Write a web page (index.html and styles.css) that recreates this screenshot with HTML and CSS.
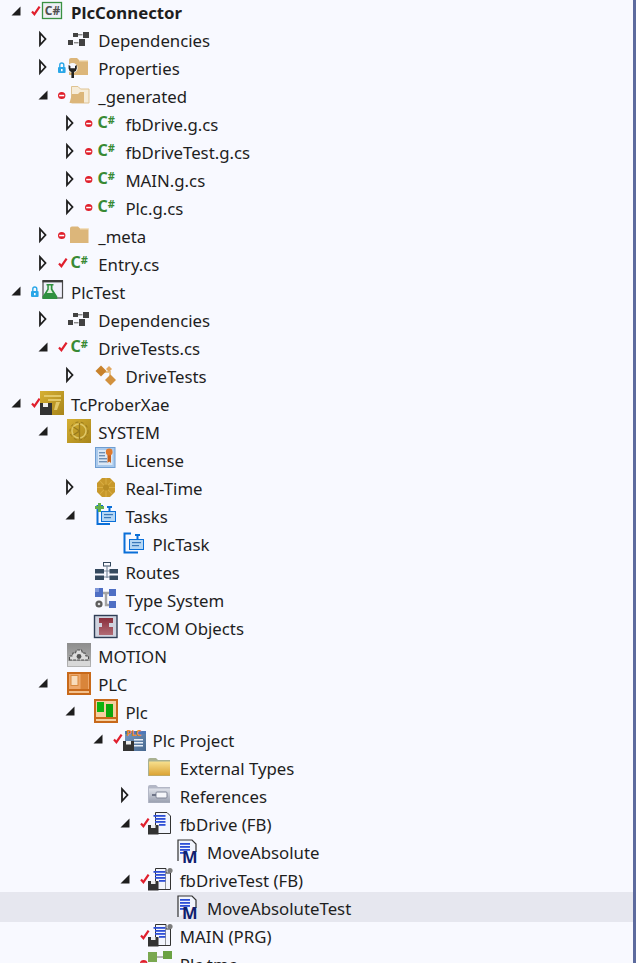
FILE: index.html
```html
<!DOCTYPE html>
<html lang="en">
<head>
<meta charset="utf-8">
<title>Solution Explorer</title>
<link rel="stylesheet" href="styles.css">
</head>
<body>
<svg class="defs" aria-hidden="true">
  <defs>
    <linearGradient id="gold" x1="0" y1="0" x2="1" y2="1"><stop offset="0" stop-color="#d6b034"/><stop offset="1" stop-color="#a8851a"/></linearGradient>
    <linearGradient id="grey" x1="0" y1="0" x2="0" y2="1"><stop offset="0" stop-color="#8d8d8d"/><stop offset="1" stop-color="#b4b4b4"/></linearGradient>
    <linearGradient id="yel" x1="0" y1="0" x2="0" y2="1"><stop offset="0" stop-color="#f7e08e"/><stop offset="1" stop-color="#dba233"/></linearGradient>
    <linearGradient id="gfold" x1="0" y1="0" x2="0" y2="1"><stop offset="0" stop-color="#dfe2ea"/><stop offset="1" stop-color="#9aa0b0"/></linearGradient>
    <linearGradient id="docb" x1="0" y1="0" x2="1" y2="1"><stop offset="0" stop-color="#7a9cc6"/><stop offset="1" stop-color="#47688f"/></linearGradient>
    <linearGradient id="maroon" x1="0" y1="0" x2="0" y2="1"><stop offset="0" stop-color="#8a2f3c"/><stop offset="1" stop-color="#b06a74"/></linearGradient>
  </defs>
  <symbol id="t-open" viewBox="0 0 23 28"><polygon points="12.5,7.5 12.5,16.5 3.5,16.5" fill="#1e1e1e"/></symbol>
  <symbol id="t-closed" viewBox="0 0 23 28"><polygon points="5,6 5,18 10.5,12" fill="#f8f9ff" stroke="#1e1e1e" stroke-width="1.8"/></symbol>
  <symbol id="s-check" viewBox="0 0 10 28"><path d="M1 12.5 L3.4 15.2 L8.6 7.6" fill="none" stroke="#e01f2d" stroke-width="2.2"/></symbol>
  <symbol id="s-minus" viewBox="0 0 10 28"><ellipse cx="3.7" cy="12.5" rx="3.7" ry="3.5" fill="#e0202c"/><rect x="1.2" y="11.8" width="5" height="1.5" fill="#fff"/></symbol>
  <symbol id="s-lock" viewBox="0 0 10 28"><path d="M1.8 12 V10 a2 2 0 0 1 4 0 V12" fill="none" stroke="#2aa7e8" stroke-width="1.4"/><rect x="0" y="12" width="7.6" height="6" rx="1" fill="#2aa7e8"/><rect x="3" y="14" width="1.6" height="2.2" fill="#fff"/></symbol>

  <symbol id="i-csproj" viewBox="0 0 24 28"><rect x="1.5" y="3.5" width="19" height="16" fill="#eef0f6" stroke="#3a9142" stroke-width="1.3"/></symbol>
  <symbol id="i-deps" viewBox="0 0 24 28"><g fill="#424242"><rect x="0" y="13" width="5" height="5"/><rect x="5" y="6" width="5" height="4"/><rect x="11" y="12" width="6" height="7"/><rect x="15" y="5" width="6" height="6"/></g><g fill="#8a8a8a"><rect x="10" y="7" width="4.5" height="1.4"/><rect x="6" y="15" width="4.5" height="1.4"/></g></symbol>
  <symbol id="i-props" viewBox="0 0 24 28"><path d="M1 5 q0-2 2-2 h6 l2 2 h9 v15 H1z" fill="#dcb67a"/><rect x="11" y="5" width="9" height="1.4" fill="#f2e0c0"/><circle cx="4.6" cy="13" r="5" fill="#f8f9ff"/><path d="M.6 10 v3.500 a4 4 0 0 0 2.800 3.400 V23 h2.600 v-6.100 a4 4 0 0 0 2.800-3.400 v-3.500 l-1.800 1 v2.200 h-4.600 v-2.200z" fill="#222"/></symbol>
  <symbol id="i-fopen" viewBox="0 0 24 28"><path d="M3.5 3.5 h6.5 l2.500 2.500 h8.500 v14 H3.500z" fill="#f6ecd9" stroke="#dfc392"/><polygon points="1.500,20 4,11 10,11 12,9 16,9 16,20" fill="#dcb67a"/></symbol>
  <symbol id="i-folder" viewBox="0 0 24 28"><path d="M2 5.500 q0-2 2-2 h6 l2 2 h8.500 V20 H2z" fill="#dcb67a"/><rect x="12" y="5" width="8.500" height="1.400" fill="#f2e0c0"/></symbol>
  <symbol id="i-flask" viewBox="0 0 24 28"><rect x="2" y="2" width="19.500" height="17" fill="#f0f0fb" stroke="#4a4a4a" stroke-width="1.200"/><rect x="1.500" y="1" width="20.500" height="2.400" fill="#3c3c3c"/><path d="M5.500 5 h7 v1.500 h-1 v3.500 l4.800 7.500 v2.500 H1.500 V17.500 L6.300 10 V6.500 h-.8z" fill="#2f9040"/><path d="M7.800 6.500 h2 v4 l2 3.500 h-6 l2-3.500z" fill="#dff0dc"/></symbol>
  <symbol id="i-class" viewBox="0 0 24 28"><path d="M7 9 L15 9 L15 17" fill="none" stroke="#e8c590" stroke-width="2"/><polygon points="6,2.500 11.500,8 6,13.500 .5,8" fill="#c8822c"/><polygon points="15.500,11.500 21,17 15.500,22.500 10,17" fill="#d2913e"/><polygon points="14,3 17,6 14,9 11,6" fill="#e2a860"/></symbol>
  <symbol id="i-tcproj" viewBox="0 0 24 28"><rect x="-1" y="0" width="24" height="24" fill="url(#gold)"/><path d="M3 4 h17 v2 h-17z M7 8 h13 v2 h-13z M15 11 h4 l-3 8 h-3z" fill="#e2c868"/><rect x="-1" y="12" width="12" height="12" fill="#333"/><rect x="2" y="12" width="5" height="4" fill="#eee"/></symbol>
  <symbol id="i-system" viewBox="0 0 24 28"><rect x="-1" y="0" width="24" height="24" fill="url(#gold)"/><circle cx="11" cy="12" r="7" fill="none" stroke="#e0c868" stroke-width="1.500"/><circle cx="11" cy="12" r="9" fill="none" stroke="#97791c" stroke-width="1" stroke-dasharray="3 2.500"/><path d="M11.500 4 V20 M11.500 12 L5.500 8 M11.500 12 L5.500 16" stroke="#97791c" stroke-width="1.300" fill="none"/></symbol>
  <symbol id="i-license" viewBox="0 0 24 28"><rect x=".5" y=".5" width="19.500" height="20" fill="#a9c9ec" stroke="#6e9dd2"/><rect x="3" y="3" width="14.500" height="15" fill="#dbe8f6"/><g fill="#6e8fb5"><rect x="4" y="5" width="6" height="1.400"/><rect x="4" y="8" width="6" height="1.400"/><rect x="4" y="11" width="8" height="1.400"/><rect x="4" y="14" width="8" height="1.400"/></g><path d="M12.500 8 h3.500 v8 l-1.800-1.500 L12.500 16z" fill="#c8601c"/><circle cx="14.200" cy="5" r="3.400" fill="#e07a2c"/></symbol>
  <symbol id="i-rt" viewBox="0 0 24 28"><polygon points="7,3 15,3 20,8 20,17 15,22 7,22 2,17 2,8" fill="#c8992c"/><path d="M11 3 V22 M2 12.500 H20 M5 6 L17 19 M17 6 L5 19" stroke="#d9ae44" stroke-width="1.100"/><circle cx="11" cy="12.500" r="3" fill="#b88c24"/></symbol>
  <symbol id="i-tasks" viewBox="0 0 24 28"><path d="M8 3 H2.500 V21 H15" fill="none" stroke="#0a6fd8" stroke-width="2"/><path d="M12 4 h5 M14.500 4 v4" stroke="#0a6fd8" stroke-width="2" fill="none"/><rect x="6.500" y="8.500" width="14" height="10" fill="#b4d6f4" stroke="#0a6fd8"/><g fill="#3b78b8"><rect x="9" y="11" width="9" height="1.200"/><rect x="9" y="14" width="7" height="1.200"/></g><path d="M3 0 h3 v3 h3 v3 h-3 v3 h-3 v-3 h-3 v-3 h3z" fill="#62ae4c"/></symbol>
  <symbol id="i-task" viewBox="0 0 24 28"><path d="M8 2.500 H1.500 V21.500 H15" fill="none" stroke="#0a6fd8" stroke-width="2"/><path d="M12 4 h5 M14.500 4 v4" stroke="#0a6fd8" stroke-width="2" fill="none"/><rect x="6.500" y="8.500" width="14" height="10" fill="#b4d6f4" stroke="#0a6fd8"/><g fill="#3b78b8"><rect x="9" y="11" width="9" height="1.200"/><rect x="9" y="14" width="7" height="1.200"/></g></symbol>
  <symbol id="i-routes" viewBox="0 0 24 28"><rect x="8.500" y="3.500" width="7" height="3.500" fill="#f8f9ff" stroke="#34495e"/><path d="M12 7 V19 M8 12 H15 M8 18 H15" stroke="#7f8ea0" stroke-width="1.200"/><g fill="#34495e"><rect x="0" y="10" width="9" height="4.500"/><rect x="0" y="16.500" width="9" height="4.500"/><rect x="14.500" y="10" width="8.500" height="4.500"/><rect x="14.500" y="16.500" width="8.500" height="4.500"/></g></symbol>
  <symbol id="i-types" viewBox="0 0 24 28"><path d="M8 6 H11 V18 H14 M11 6 H14" fill="none" stroke="#a4a4a4" stroke-width="2.400"/><rect x="0" y="1" width="8" height="9" fill="#4f6fc4"/><rect x="0" y="1" width="4" height="4" fill="#7f97d8"/><rect x="14" y="2" width="7" height="7" fill="#4f6fc4"/><rect x="14" y="14" width="7" height="7" fill="#4f6fc4"/><circle cx="4" cy="17" r="3.600" fill="#5c5c5c"/><circle cx="4" cy="17" r="1.300" fill="#ddd"/></symbol>
  <symbol id="i-tccom" viewBox="0 0 24 28"><rect x="-.5" y=".5" width="22.500" height="22" fill="#cfd2de" stroke="#2f3e56" stroke-width="1.400"/><path d="M4 3 h14 v5 h-4 v4 h4 v8 H4 v-8 h3 V8 H4z" fill="url(#maroon)"/></symbol>
  <symbol id="i-motion" viewBox="0 0 24 28"><rect x="-1" y="0" width="24" height="24" fill="url(#grey)"/><rect x="0" y="18" width="22" height="5" fill="#d8d8d8"/><path d="M1.500 17 v-4 h2.500 l1-3 h2.500 l1-3 h5 l1 3 h2.500 l1 3 h2.500 v4z" fill="#dcdcdc" stroke="#4e4e4e" stroke-width="1.100" stroke-dasharray="3 1"/><circle cx="11" cy="13.500" r="2.400" fill="#555"/></symbol>
  <symbol id="i-plc" viewBox="0 0 24 28"><rect x="-1" y="1" width="24" height="23" fill="#c8691a"/><rect x="1" y="3" width="20" height="15" fill="#eda86c"/><rect x="3" y="4.500" width="7" height="10" fill="#f8dcbc" stroke="#d88a40"/><rect x="12.500" y="3" width="7.500" height="15" fill="#d9853a"/><rect x="1" y="20" width="20" height="2" fill="#f3c08c"/></symbol>
  <symbol id="i-plcg" viewBox="0 0 24 28"><rect x="-1" y="0" width="24" height="24" fill="#c8691a"/><rect x="1" y="2" width="20" height="16" fill="#f5cfa0"/><rect x="2" y="3" width="7" height="10" fill="#0fb30f"/><rect x="11" y="5" width="7" height="13" fill="#0ca60c"/><rect x="1" y="20" width="20" height="2" fill="#f5cfa0"/></symbol>
  <symbol id="i-plcproj" viewBox="0 0 24 28"><rect x="2" y="4" width="21" height="20" fill="url(#docb)"/><rect x="2" y="4" width="21" height="3" fill="#4e78ba"/><g fill="#e8eef6"><rect x="11" y="12" width="9" height="1.500"/><rect x="11" y="15" width="9" height="1.500"/><rect x="11" y="18" width="9" height="1.500"/></g><rect x="0" y="14" width="11" height="10" fill="#333"/><rect x="3" y="14" width="5" height="3.500" fill="#eee"/></symbol>
  <symbol id="i-ext" viewBox="0 0 24 28"><path d="M-2 5 q0-2 2-2 h6 l2 2 h12 V21 H-2z" fill="#a9b192"/><rect x="-1" y="6.500" width="21" height="14" fill="url(#yel)"/></symbol>
  <symbol id="i-refs" viewBox="0 0 24 28"><path d="M-2 4 q0-2 2-2 h6 l2 2 h12 V20 H-2z" fill="#b3b7c6"/><rect x="-1" y="5.500" width="21" height="14" fill="url(#gfold)"/><rect x="6" y="9" width="11" height="6" rx="1" fill="#f5f6fa" stroke="#7e8496"/><rect x="2" y="11" width="4" height="2" fill="#6f7588"/></symbol>
  <symbol id="i-pou" viewBox="0 0 24 28"><path d="M5.500 1.500 H17 l3.500 3.500 V22.500 H5.500z" fill="#f2f5fd" stroke="#333"/><g fill="#2d4fd6"><rect x="3.500" y="4" width="12" height="1.800"/><rect x="5" y="7" width="10.500" height="1.800"/><rect x="5" y="10" width="10.500" height="1.800"/><rect x="9" y="13" width="6.500" height="1.800"/></g><rect x="-2" y="14" width="10.500" height="9.500" fill="#333"/><rect x="1" y="14" width="4.500" height="3" fill="#eee"/></symbol>
  <symbol id="i-pout" viewBox="0 0 24 28"><path d="M5.500 1.500 H16 V22.500 H5.500z" fill="#f2f5fd" stroke="#333"/><path d="M16 6 h4.500 V22.500 h-4.500" fill="#f2f5fd" stroke="#333"/><circle cx="20" cy="3.500" r="2.600" fill="#7d7d7d"/><g fill="#2d4fd6"><rect x="3.500" y="4" width="12" height="1.800"/><rect x="5" y="7" width="10.500" height="1.800"/><rect x="5" y="10" width="10.500" height="1.800"/><rect x="9" y="13" width="6.500" height="1.800"/></g><rect x="-2" y="14" width="10.500" height="9.500" fill="#333"/><rect x="1" y="14" width="4.500" height="3" fill="#eee"/></symbol>
  <symbol id="i-method" viewBox="0 0 24 28"><path d="M1 22 V1 H15 l4 4 V13" fill="#f2f5fd" stroke="#333" stroke-width="1.200"/><g fill="#2d4fd6"><rect x="3" y="4" width="10" height="1.800"/><rect x="3" y="7" width="10" height="1.800"/><rect x="3" y="10" width="10" height="1.800"/><rect x="3" y="13" width="5" height="1.800"/></g></symbol>
  <symbol id="i-tmc" viewBox="0 0 24 28"><path d="M6 6 H15" stroke="#9c9c9c" stroke-width="1.500"/><rect x="-2" y="1" width="9" height="10" fill="#7aa850"/><rect x="13" y="0" width="9" height="8" fill="#6ba244"/></symbol>
</svg>
<div class="pane">
  <main class="tree">
    <div class="row l0"><span class="twisty"><svg><use href="#t-open"/></svg></span><span class="status"><svg><use href="#s-check"/></svg></span><span class="icon"><svg><use href="#i-csproj"/><text class="g-proj" x="3.800" y="16">C#</text></svg></span><span class="label bold">PlcConnector</span></div>
    <div class="row l1"><span class="twisty"><svg><use href="#t-closed"/></svg></span><span class="status"></span><span class="icon"><svg><use href="#i-deps"/></svg></span><span class="label">Dependencies</span></div>
    <div class="row l1"><span class="twisty"><svg><use href="#t-closed"/></svg></span><span class="status"><svg><use href="#s-lock"/></svg></span><span class="icon"><svg><use href="#i-props"/></svg></span><span class="label">Properties</span></div>
    <div class="row l1"><span class="twisty"><svg><use href="#t-open"/></svg></span><span class="status"><svg><use href="#s-minus"/></svg></span><span class="icon"><svg><use href="#i-fopen"/></svg></span><span class="label">_generated</span></div>
    <div class="row l2"><span class="twisty"><svg><use href="#t-closed"/></svg></span><span class="status"><svg><use href="#s-minus"/></svg></span><span class="icon"><svg><text class="g-cs" x="2.500" y="17">C<tspan class="g-hash" dy="-4">#</tspan></text></svg></span><span class="label">fbDrive.g.cs</span></div>
    <div class="row l2"><span class="twisty"><svg><use href="#t-closed"/></svg></span><span class="status"><svg><use href="#s-minus"/></svg></span><span class="icon"><svg><text class="g-cs" x="2.500" y="17">C<tspan class="g-hash" dy="-4">#</tspan></text></svg></span><span class="label">fbDriveTest.g.cs</span></div>
    <div class="row l2"><span class="twisty"><svg><use href="#t-closed"/></svg></span><span class="status"><svg><use href="#s-minus"/></svg></span><span class="icon"><svg><text class="g-cs" x="2.500" y="17">C<tspan class="g-hash" dy="-4">#</tspan></text></svg></span><span class="label">MAIN.g.cs</span></div>
    <div class="row l2"><span class="twisty"><svg><use href="#t-closed"/></svg></span><span class="status"><svg><use href="#s-minus"/></svg></span><span class="icon"><svg><text class="g-cs" x="2.500" y="17">C<tspan class="g-hash" dy="-4">#</tspan></text></svg></span><span class="label">Plc.g.cs</span></div>
    <div class="row l1"><span class="twisty"><svg><use href="#t-closed"/></svg></span><span class="status"><svg><use href="#s-minus"/></svg></span><span class="icon"><svg><use href="#i-folder"/></svg></span><span class="label">_meta</span></div>
    <div class="row l1"><span class="twisty"><svg><use href="#t-closed"/></svg></span><span class="status"><svg><use href="#s-check"/></svg></span><span class="icon"><svg><text class="g-cs" x="2.500" y="17">C<tspan class="g-hash" dy="-4">#</tspan></text></svg></span><span class="label">Entry.cs</span></div>
    <div class="row l0"><span class="twisty"><svg><use href="#t-open"/></svg></span><span class="status"><svg><use href="#s-lock"/></svg></span><span class="icon"><svg><use href="#i-flask"/></svg></span><span class="label">PlcTest</span></div>
    <div class="row l1"><span class="twisty"><svg><use href="#t-closed"/></svg></span><span class="status"></span><span class="icon"><svg><use href="#i-deps"/></svg></span><span class="label">Dependencies</span></div>
    <div class="row l1"><span class="twisty"><svg><use href="#t-open"/></svg></span><span class="status"><svg><use href="#s-check"/></svg></span><span class="icon"><svg><text class="g-cs" x="2.500" y="17">C<tspan class="g-hash" dy="-4">#</tspan></text></svg></span><span class="label">DriveTests.cs</span></div>
    <div class="row l2"><span class="twisty"><svg><use href="#t-closed"/></svg></span><span class="status"></span><span class="icon"><svg><use href="#i-class"/></svg></span><span class="label">DriveTests</span></div>
    <div class="row l0"><span class="twisty"><svg><use href="#t-open"/></svg></span><span class="status"><svg><use href="#s-check"/></svg></span><span class="icon"><svg><use href="#i-tcproj"/></svg></span><span class="label">TcProberXae</span></div>
    <div class="row l1"><span class="twisty"><svg><use href="#t-open"/></svg></span><span class="status"></span><span class="icon"><svg><use href="#i-system"/></svg></span><span class="label">SYSTEM</span></div>
    <div class="row l2"><span class="twisty"></span><span class="status"></span><span class="icon"><svg><use href="#i-license"/></svg></span><span class="label">License</span></div>
    <div class="row l2"><span class="twisty"><svg><use href="#t-closed"/></svg></span><span class="status"></span><span class="icon"><svg><use href="#i-rt"/></svg></span><span class="label">Real-Time</span></div>
    <div class="row l2"><span class="twisty"><svg><use href="#t-open"/></svg></span><span class="status"></span><span class="icon"><svg><use href="#i-tasks"/></svg></span><span class="label">Tasks</span></div>
    <div class="row l3"><span class="twisty"></span><span class="status"></span><span class="icon"><svg><use href="#i-task"/></svg></span><span class="label">PlcTask</span></div>
    <div class="row l2"><span class="twisty"></span><span class="status"></span><span class="icon"><svg><use href="#i-routes"/></svg></span><span class="label">Routes</span></div>
    <div class="row l2"><span class="twisty"></span><span class="status"></span><span class="icon"><svg><use href="#i-types"/></svg></span><span class="label">Type System</span></div>
    <div class="row l2"><span class="twisty"></span><span class="status"></span><span class="icon"><svg><use href="#i-tccom"/></svg></span><span class="label">TcCOM Objects</span></div>
    <div class="row l1"><span class="twisty"></span><span class="status"></span><span class="icon"><svg><use href="#i-motion"/></svg></span><span class="label">MOTION</span></div>
    <div class="row l1"><span class="twisty"><svg><use href="#t-open"/></svg></span><span class="status"></span><span class="icon"><svg><use href="#i-plc"/></svg></span><span class="label">PLC</span></div>
    <div class="row l2"><span class="twisty"><svg><use href="#t-open"/></svg></span><span class="status"></span><span class="icon"><svg><use href="#i-plcg"/></svg></span><span class="label">Plc</span></div>
    <div class="row l3"><span class="twisty"><svg><use href="#t-open"/></svg></span><span class="status"><svg><use href="#s-check"/></svg></span><span class="icon"><svg><use href="#i-plcproj"/><text class="g-plc" x="3.200" y="9">PLC</text></svg></span><span class="label">Plc Project</span></div>
    <div class="row l4"><span class="twisty"></span><span class="status"></span><span class="icon"><svg><use href="#i-ext"/></svg></span><span class="label">External Types</span></div>
    <div class="row l4"><span class="twisty"><svg><use href="#t-closed"/></svg></span><span class="status"></span><span class="icon"><svg><use href="#i-refs"/></svg></span><span class="label">References</span></div>
    <div class="row l4"><span class="twisty"><svg><use href="#t-open"/></svg></span><span class="status"><svg><use href="#s-check"/></svg></span><span class="icon"><svg><use href="#i-pou"/></svg></span><span class="label">fbDrive (FB)</span></div>
    <div class="row l5"><span class="twisty"></span><span class="status"></span><span class="icon"><svg><use href="#i-method"/><text class="g-m" x="5" y="24">M</text></svg></span><span class="label">MoveAbsolute</span></div>
    <div class="row l4"><span class="twisty"><svg><use href="#t-open"/></svg></span><span class="status"><svg><use href="#s-check"/></svg></span><span class="icon"><svg><use href="#i-pout"/></svg></span><span class="label">fbDriveTest (FB)</span></div>
    <div class="row l5 selected"><span class="twisty"></span><span class="status"></span><span class="icon"><svg><use href="#i-method"/><text class="g-m" x="5" y="24">M</text></svg></span><span class="label">MoveAbsoluteTest</span></div>
    <div class="row l4"><span class="twisty"></span><span class="status"><svg><use href="#s-check"/></svg></span><span class="icon"><svg><use href="#i-pout"/></svg></span><span class="label">MAIN (PRG)</span></div>
    <div class="row l4"><span class="twisty"></span><span class="status"><svg><use href="#s-minus"/></svg></span><span class="icon"><svg><use href="#i-tmc"/></svg></span><span class="label">Plc.tmc</span></div>
  </main>
  <div class="edge"></div>
</div>
</body>
</html>
```

FILE: styles.css
```css
* { box-sizing: border-box; }
html, body { margin: 0; height: 100%; }
body {
  background: #f8f9ff;
  color: #1e1e1e;
  font-family: "Noto Sans", "Open Sans", sans-serif;
  font-size: 16.8px;
  overflow: hidden;
}
.defs { position: absolute; width: 0; height: 0; }
symbol { overflow: visible; }
.pane { display: flex; height: 963px; overflow: hidden; }
.tree { flex: 1; min-width: 0; margin-top: -1px; isolation: isolate; }
.edge { flex: none; width: 3px; background: #5d6b9e; }
.row { display: flex; align-items: center; height: 28px; position: relative; white-space: nowrap; }
.l0 { padding-left: 8px; }
.l1 { padding-left: 35.2px; }
.l2 { padding-left: 62.4px; }
.l3 { padding-left: 89.6px; }
.l4 { padding-left: 116.8px; }
.l5 { padding-left: 144px; }
.twisty { flex: none; width: 23px; height: 28px; }
.status { flex: none; width: 10px; height: 28px; }
.icon { flex: none; width: 24px; height: 28px; }
.twisty svg, .status svg, .icon svg { display: block; width: 100%; height: 100%; overflow: visible; }
.label { margin-left: 6px; line-height: 28px; }
.bold { font-weight: 700; }
.selected::before { content: ""; position: absolute; left: 0; right: 0; top: -3px; height: 30px; background: #e6e7ef; z-index: -1; }
.g-proj { font-family: "Noto Sans", sans-serif; font-weight: 700; font-size: 12px; fill: #505050; }
.g-cs { font-family: "Noto Sans", sans-serif; font-weight: 700; font-size: 16px; fill: #388a34; }
.g-hash { font-size: 11px; }
.g-plc { font-family: "Noto Sans", sans-serif; font-weight: 700; font-size: 8.5px; fill: #f0882c; }
.g-m { font-family: "Noto Sans", sans-serif; font-weight: 700; font-size: 16.5px; fill: #10206e; }
```
